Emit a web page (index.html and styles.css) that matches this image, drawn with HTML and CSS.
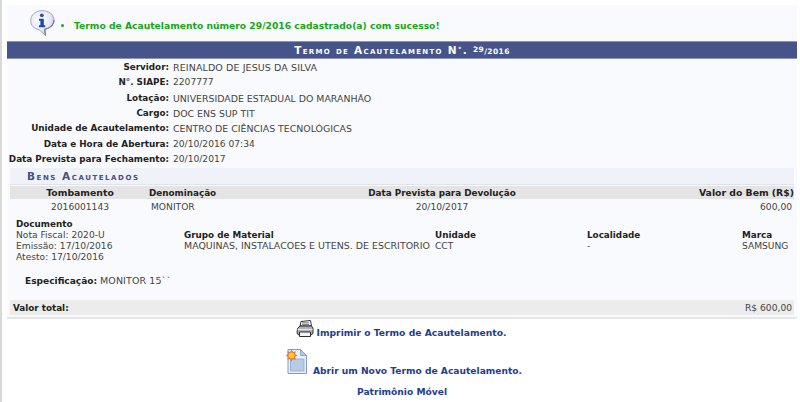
FILE: index.html
```html
<!DOCTYPE html>
<html lang="pt-BR">
<head>
<meta charset="utf-8">
<title>Termo de Acautelamento</title>
<link rel="stylesheet" href="styles.css">
</head>
<body>
<div class="page">
  <div class="message">
    <svg class="info-icon" width="26" height="27" viewBox="0 0 26 27">
      <defs>
        <radialGradient id="bub" cx="0.4" cy="0.35" r="0.75"><stop offset="0" stop-color="#ffffff"/><stop offset="0.6" stop-color="#e6e8f8"/><stop offset="1" stop-color="#a9acd6"/></radialGradient>
      </defs>
      <path d="M12 .7C5.500 .7 .7 4.800 .7 10.500C.7 15.500 4 18.800 9 19.600L15.500 25.500L14.800 19.300C20.500 18 24 14.500 24 10C24 4.500 19 .7 12 .7Z" fill="url(#bub)" stroke="#a4a6cc" stroke-width="1"/>
      <path d="M15.500 25.500L14.800 19.300C20.500 18 24 14.500 24 10" fill="none" stroke="#77798f" stroke-width="1.200"/>
      <circle cx="11.800" cy="5.300" r="1.900" fill="#2c50b8"/>
      <path d="M9 8.800H13.800V15.300H15.200V17.300H9V15.300H10.400V10.800H9Z" fill="#1f45b0"/>
    </svg>
    <ul class="message-list"><li>Termo de Acautelamento número 29/2016 cadastrado(a) com sucesso!</li></ul>
  </div>

  <section class="form-box">
    <h1 class="caption">Termo de Acautelamento N<span class="caption-deg">°</span>. <span class="caption-sup">29</span><span class="caption-num">/2016</span></h1>
    <dl class="fields">
      <dt>Servidor:</dt><dd class="caps-wide">REINALDO DE JESUS DA SILVA</dd>
      <dt>N°. SIAPE:</dt><dd>2207777</dd>
      <dt>Lotação:</dt><dd class="caps">UNIVERSIDADE ESTADUAL DO MARANHÃO</dd>
      <dt>Cargo:</dt><dd class="caps">DOC ENS SUP TIT</dd>
      <dt>Unidade de Acautelamento:</dt><dd class="caps">CENTRO DE CIÊNCIAS TECNOLÓGICAS</dd>
      <dt>Data e Hora de Abertura:</dt><dd>20/10/2016 07:34</dd>
      <dt>Data Prevista para Fechamento:</dt><dd>20/10/2017</dd>
    </dl>

    <div class="goods">
      <h2 class="goods-title">Bens Acautelados</h2>
      <div class="goods-grid goods-head">
        <span class="col-tomb head-wide">Tombamento</span>
        <span>Denominação</span>
        <span class="col-date">Data Prevista para Devolução</span>
        <span class="col-value head-wide">Valor do Bem (R$)</span>
      </div>
      <div class="goods-grid goods-row">
        <span class="col-tomb">2016001143</span>
        <span class="col-name">MONITOR</span>
        <span class="col-date">20/10/2017</span>
        <span class="col-value col-value-data">600,00</span>
      </div>
      <div class="details">
        <div class="detail-doc">
          <strong>Documento</strong>
          <span>Nota Fiscal: 2020-U</span>
          <span>Emissão: 17/10/2016</span>
          <span>Atesto: 17/10/2016</span>
        </div>
        <div class="detail-group"><strong>Grupo de Material</strong><span class="caps-long">MAQUINAS, INSTALACOES E UTENS. DE ESCRITORIO</span></div>
        <div class="detail-unit"><strong>Unidade</strong><span>CCT</span></div>
        <div class="detail-place"><strong>Localidade</strong><span>-</span></div>
        <div class="detail-brand"><strong>Marca</strong><span>SAMSUNG</span></div>
      </div>
      <p class="spec"><strong>Especificação:</strong> <span class="caps-wide">MONITOR 15``</span></p>
      <div class="total"><strong>Valor total:</strong><span>R$ 600,00</span></div>
    </div>
  </section>

  <nav class="actions">
    <a class="action action-print" href="#">
      <svg width="18" height="17" viewBox="0 0 18 17">
        <path d="M5 1.500L14.500 .5L15.500 6H4Z" fill="#fff" stroke="#333" stroke-width="1"/>
        <path d="M6 2.800H13M6 4.400H13" stroke="#555" stroke-width=".8"/>
        <path d="M1.500 8.500L4 6H15.500L17 8V13.500L15 15H3L1 13.500Z" fill="#a9aeb8" stroke="#2c2c2c" stroke-width="1"/>
        <path d="M1.500 9.500H16.500" stroke="#e4e6ea" stroke-width="1.200"/>
        <path d="M3.500 12H14.500V16.500H3.500Z" fill="#f2f2f2" stroke="#2c2c2c" stroke-width="1"/>
      </svg>
      <span>Imprimir o Termo de Acautelamento.</span>
    </a>
    <a class="action action-new" href="#">
      <svg width="21" height="26" viewBox="0 0 21 26">
        <path d="M2 .5H14.500L20.500 6.500V24.500H2Z" fill="#e9eff8" stroke="#7f9cc4" stroke-width="1"/>
        <path d="M14.500 .5V6.500H20.500Z" fill="#b4c9e4" stroke="#7f9cc4" stroke-width=".8"/>
        <rect x="4.500" y="10" width="13.500" height="12" fill="#b8cbe6" stroke="#8eaad0" stroke-width=".8"/>
        <path d="M5.500 .5L7 3L9.800 2.200L9 5L11.500 6.500L9 8L9.800 10.800L7 10L5.500 12.500L4 10L1.200 10.800L2 8L-.5 6.500L2 5L1.200 2.200L4 3Z" fill="#ef6f45"/>
        <circle cx="5.500" cy="6.500" r="3" fill="#f7d21f"/>
      </svg>
      <span>Abrir um Novo Termo de Acautelamento.</span>
    </a>
    <a class="action action-home" href="#"><span>Patrimônio Móvel</span></a>
  </nav>
</div>
</body>
</html>
```
FILE: styles.css
```css
* { box-sizing: border-box; }
html, body { margin: 0; padding: 0; background: #fff; }
body { height: 402px; overflow: hidden; font-family: Verdana, "DejaVu Sans", sans-serif; font-size: 9.150px; color: #444; }
.page { margin-left: 2px; padding: 5px 3px 0 5px; height: 402px; box-shadow: -2px 0 0 #d8d8d8; }
.message { display: flex; align-items: flex-start; height: 36px; background: #f9fafd; padding: 5px 0 0 23px; }
.info-icon { flex: none; }
.message-list { margin: 10px 0 0; padding: 0 0 0 18px; color: #15a815; font-weight: bold; font-size: 9.200px; }
.form-box { background: #f9fafd; border-bottom: 2px solid #e6e6e6; height: 278px; }
.caption { margin: 0; height: 18px; background: #46548a; border: 1px solid #8d93b4; border-width: 1px 0; color: #fff; font-size: 10.500px; font-weight: bold; font-variant: small-caps; letter-spacing: 1.300px; text-align: center; line-height: 15px; }
.caption-deg { font-size: 7px; vertical-align: 2px; }
.caption-sup { font-size: 7.500px; vertical-align: 2px; letter-spacing: .4px; }
.caption-num { font-size: 7.500px; letter-spacing: .4px; }
.fields { display: grid; grid-template-columns: 162px 1fr; grid-auto-rows: 15.330px; margin: 0; padding-top: 1px; line-height: 15px; }
.fields dt { text-align: right; font-weight: bold; color: #222; font-size: 8.800px; white-space: nowrap; }
.fields dd { margin: 0; padding-left: 4px; }
.caps { font-size: 9.400px; }
.caps-long { font-size: 9.450px; }
.caps-wide { font-size: 9.500px; letter-spacing: .1px; }
.goods { margin: 1px 3px 0 3px; }
.goods-title { margin: 0; height: 17px; padding-left: 17px; background: #eff2f9; border-bottom: 1px solid #dfe3ee; color: #46507e; font-size: 10.500px; font-weight: bold; font-variant: small-caps; letter-spacing: 1.550px; line-height: 17px; }
.goods-grid { display: grid; grid-template-columns: 139px 159px 268px 1fr; align-items: center; margin-top: 1px; }
.goods-head { height: 13px; background: #e4e4e4; color: #222; font-weight: bold; font-size: 8.800px; }
.head-wide { font-size: 9.300px; }
.goods-row { height: 14px; }
.col-tomb { text-align: center; padding-left: 1px; }
.col-name { padding-left: 2px; }
.col-date { text-align: center; }
.col-value { text-align: right; }
.col-value-data { padding-right: 2px; }
.details { display: grid; grid-template-columns: 168px 251px 152px 155px 1fr; margin-top: 4.500px; padding-left: 6px; line-height: 10.700px; }
.details > div { display: flex; flex-direction: column; }
.details strong { color: #222; font-size: 8.800px; }
.detail-doc { padding-top: .6px; }
.detail-group, .detail-unit, .detail-place, .detail-brand { padding-top: 11px; }
.spec { margin: 12.700px 0 0 15px; line-height: 12px; }
.spec strong { color: #222; font-size: 9.050px; }
.total { display: flex; justify-content: space-between; margin-top: 13px; height: 15px; padding: 1px 2px 0 3px; align-items: center; background: #ececec; }
.total strong { color: #222; font-size: 8.800px; }
.actions { display: flex; flex-direction: column; align-items: center; }
.action { display: flex; align-items: flex-end; text-decoration: none; color: #1f3d8f; font-weight: bold; white-space: nowrap; }
.action svg { align-self: flex-start; }
.action-print { margin-top: 1px; margin-right: 2px; gap: 3px; height: 18px; font-size: 9.200px; }
.action-new { margin-top: 11px; margin-left: 4px; gap: 6px; height: 27px; }
.action-home { margin-top: 8px; height: 13px; }
```
